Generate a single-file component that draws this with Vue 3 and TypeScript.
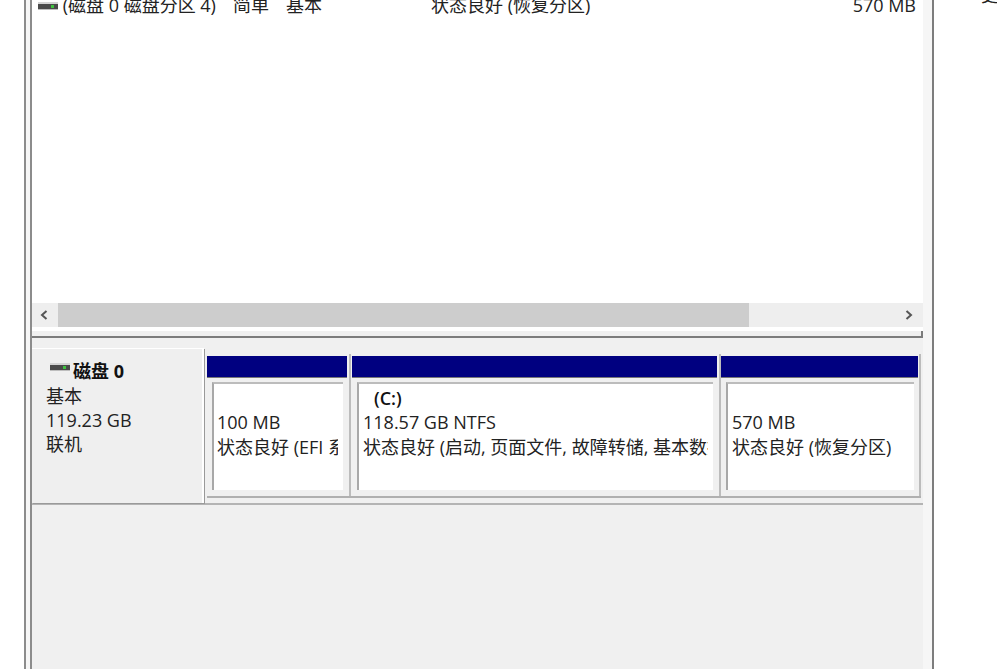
<script setup lang="ts">
interface Partition {
  name?: string
  size: string
  status: string
}

const partitions: Partition[] = [
  { size: '100 MB', status: '状态良好 (EFI 系统分区)' },
  { name: '(C:)', size: '118.57 GB NTFS', status: '状态良好 (启动, 页面文件, 故障转储, 基本数据分区)' },
  { size: '570 MB', status: '状态良好 (恢复分区)' }
]
</script>

<template>
  <div class="page">
    <div class="frame">
      <div class="main">
        <div class="list">
          <div class="row">
            <span class="vol">
              <svg class="disk-icon" viewBox="0 0 20 10" width="20" height="10">
                <rect x="0" y="1" width="20" height="2" fill="#d4d4d4" />
                <rect x="0" y="3" width="20" height="5" fill="#4a4a4a" />
                <rect x="13" y="4" width="3" height="3" fill="#3fc23f" />
                <rect x="0" y="8" width="20" height="1" fill="#bdbdbd" />
              </svg>
              (磁盘 0 磁盘分区 4)
            </span>
            <span class="layout">简单</span>
            <span class="type">基本</span>
            <span class="state">状态良好 (恢复分区)</span>
            <span class="cap">570 MB</span>
          </div>
        </div>

        <div class="scrollbar">
          <svg class="arrow arrow-left" viewBox="0 0 8 10" width="8" height="10">
            <path d="M6.5 1 L2 5 L6.5 9" fill="none" stroke="#555" stroke-width="2" />
          </svg>
          <div class="track"><div class="thumb"></div></div>
          <svg class="arrow arrow-right" viewBox="0 0 8 10" width="8" height="10">
            <path d="M1.5 1 L6 5 L1.5 9" fill="none" stroke="#555" stroke-width="2" />
          </svg>
        </div>

        <div class="splitter"></div>

        <div class="disk-row">
          <div class="disk-label">
            <div class="disk-title">
              <svg class="title-icon" viewBox="0 0 20 10" width="20" height="10">
                <rect x="0" y="0" width="20" height="2" fill="#d4d4d4" />
                <rect x="0" y="2" width="20" height="5" fill="#4a4a4a" />
                <rect x="13" y="3" width="3" height="3" fill="#3fc23f" />
                <rect x="0" y="7" width="20" height="1" fill="#bdbdbd" />
              </svg>
              <b>磁盘 0</b>
            </div>
            <div>基本</div>
            <div>119.23 GB</div>
            <div>联机</div>
          </div>

          <div class="partitions">
            <div v-for="p in partitions" :key="p.size" class="part">
              <div class="part-bar"></div>
              <div class="part-body">
                <div class="part-name">{{ p.name }}</div>
                <div class="part-line">{{ p.size }}</div>
                <div class="part-line part-status">{{ p.status }}</div>
              </div>
            </div>
          </div>
        </div>
      </div>
    </div>
    <div class="side">更多操作</div>
  </div>
</template>

<style scoped>
.page {
  display: flex;
  width: 997px;
  height: 669px;
  overflow: hidden;
  background: #fff;
  color: #222;
  font-family: "Open Sans", "Noto Sans CJK SC", sans-serif;
  font-size: 18px;
  line-height: 24px;
}

.frame {
  flex: none;
  width: 893px;
  margin-left: 24px;
  padding: 0 9px 0 4px;
  border-left: 2px solid #8c8c8c;
  border-right: 2px solid #7d7d7d;
  background: #f6f6f6;
}

.main {
  height: 669px;
  border-left: 2px solid #8c8c8c;
  background: #f0f0f0;
  display: flex;
  flex-direction: column;
}

.list {
  height: 303px;
  background: #fff;
  overflow: hidden;
}

.row {
  display: grid;
  grid-template-columns: 195px 53px 145px 1fr 80px;
  margin-top: -7px;
  height: 24px;
  padding: 0 7px 0 6px;
}

.vol {
  white-space: nowrap;
}

.disk-icon {
  vertical-align: 1px;
}

.cap {
  text-align: right;
}

.scrollbar {
  display: flex;
  align-items: center;
  height: 24px;
  background: #eeeeee;
}

.arrow {
  flex: none;
}

.arrow-left {
  margin: 0 10px 0 8px;
}

.arrow-right {
  margin: 0 10px 0 8px;
}

.track {
  flex: 1;
  height: 24px;
}

.thumb {
  width: 691px;
  height: 24px;
  background: #cdcdcd;
}

.splitter {
  height: 5px;
  margin-top: 4px;
  border-bottom: 2px solid #7c7c7c;
  border-right: 2px solid #7c7c7c;
  background: #f0f0f0;
  box-shadow: 0 -4px 0 #fff;
}

.disk-row {
  display: flex;
  margin-top: 10px;
  height: 155px;
  border-bottom: 2px solid #b4b4b4;
}

.disk-label {
  flex: none;
  width: 172px;
  padding: 10px 0 0 14px;
  box-sizing: border-box;
  border-top: 1px solid #fff;
  border-right: 2px solid #fff;
  background: #efefef;
  box-shadow: 1px 1px 0 #9a9a9a;
}

.disk-title {
  display: flex;
  align-items: center;
  height: 24px;
  margin-bottom: 1px;
  color: #111;
}

.title-icon {
  margin: -7px 3px 0 4px;
}

.partitions {
  flex: 1;
  min-width: 0;
  display: flex;
  margin: 6px 2px 0 3px;
  height: 142px;
  border-bottom: 2px solid #b0b0b0;
}

.part {
  display: flex;
  flex-direction: column;
  min-width: 0;
  padding: 2px 1px 0 0;
  border-right: 2px solid #bcbcbc;
}

.part:nth-child(1) {
  flex: none;
  width: 141px;
  margin-right: 1px;
}

.part:nth-child(2) {
  flex: none;
  width: 366px;
}

.part:nth-child(3) {
  flex: 1;
  padding-right: 0;
}

.part-bar {
  height: 21px;
  flex: none;
  background: #000080;
  border-bottom: 1px solid #777;
  margin-right: 1px;
}

.part-body {
  height: 104px;
  margin: 4px 5px 0 5px;
  padding: 2px 5px 0 4px;
  white-space: nowrap;
  background: #fff;
  border-top: 2px solid #bcbcbc;
  border-left: 2px solid #a8a8a8;
}

.part:nth-child(1) .part-body {
  padding-left: 3px;
}

.part-name {
  height: 24px;
  padding-left: 11px;
  font-weight: 600;
  color: #111;
}

.part-line {
  height: 24px;
  overflow: hidden;
}

.part-status {
  margin-top: 1px;
}

.side {
  flex: none;
  margin: -17px 0 0 47px;
  white-space: nowrap;
}
</style>

<style>
html,
body {
  margin: 0;
  overflow: hidden;
}
</style>
